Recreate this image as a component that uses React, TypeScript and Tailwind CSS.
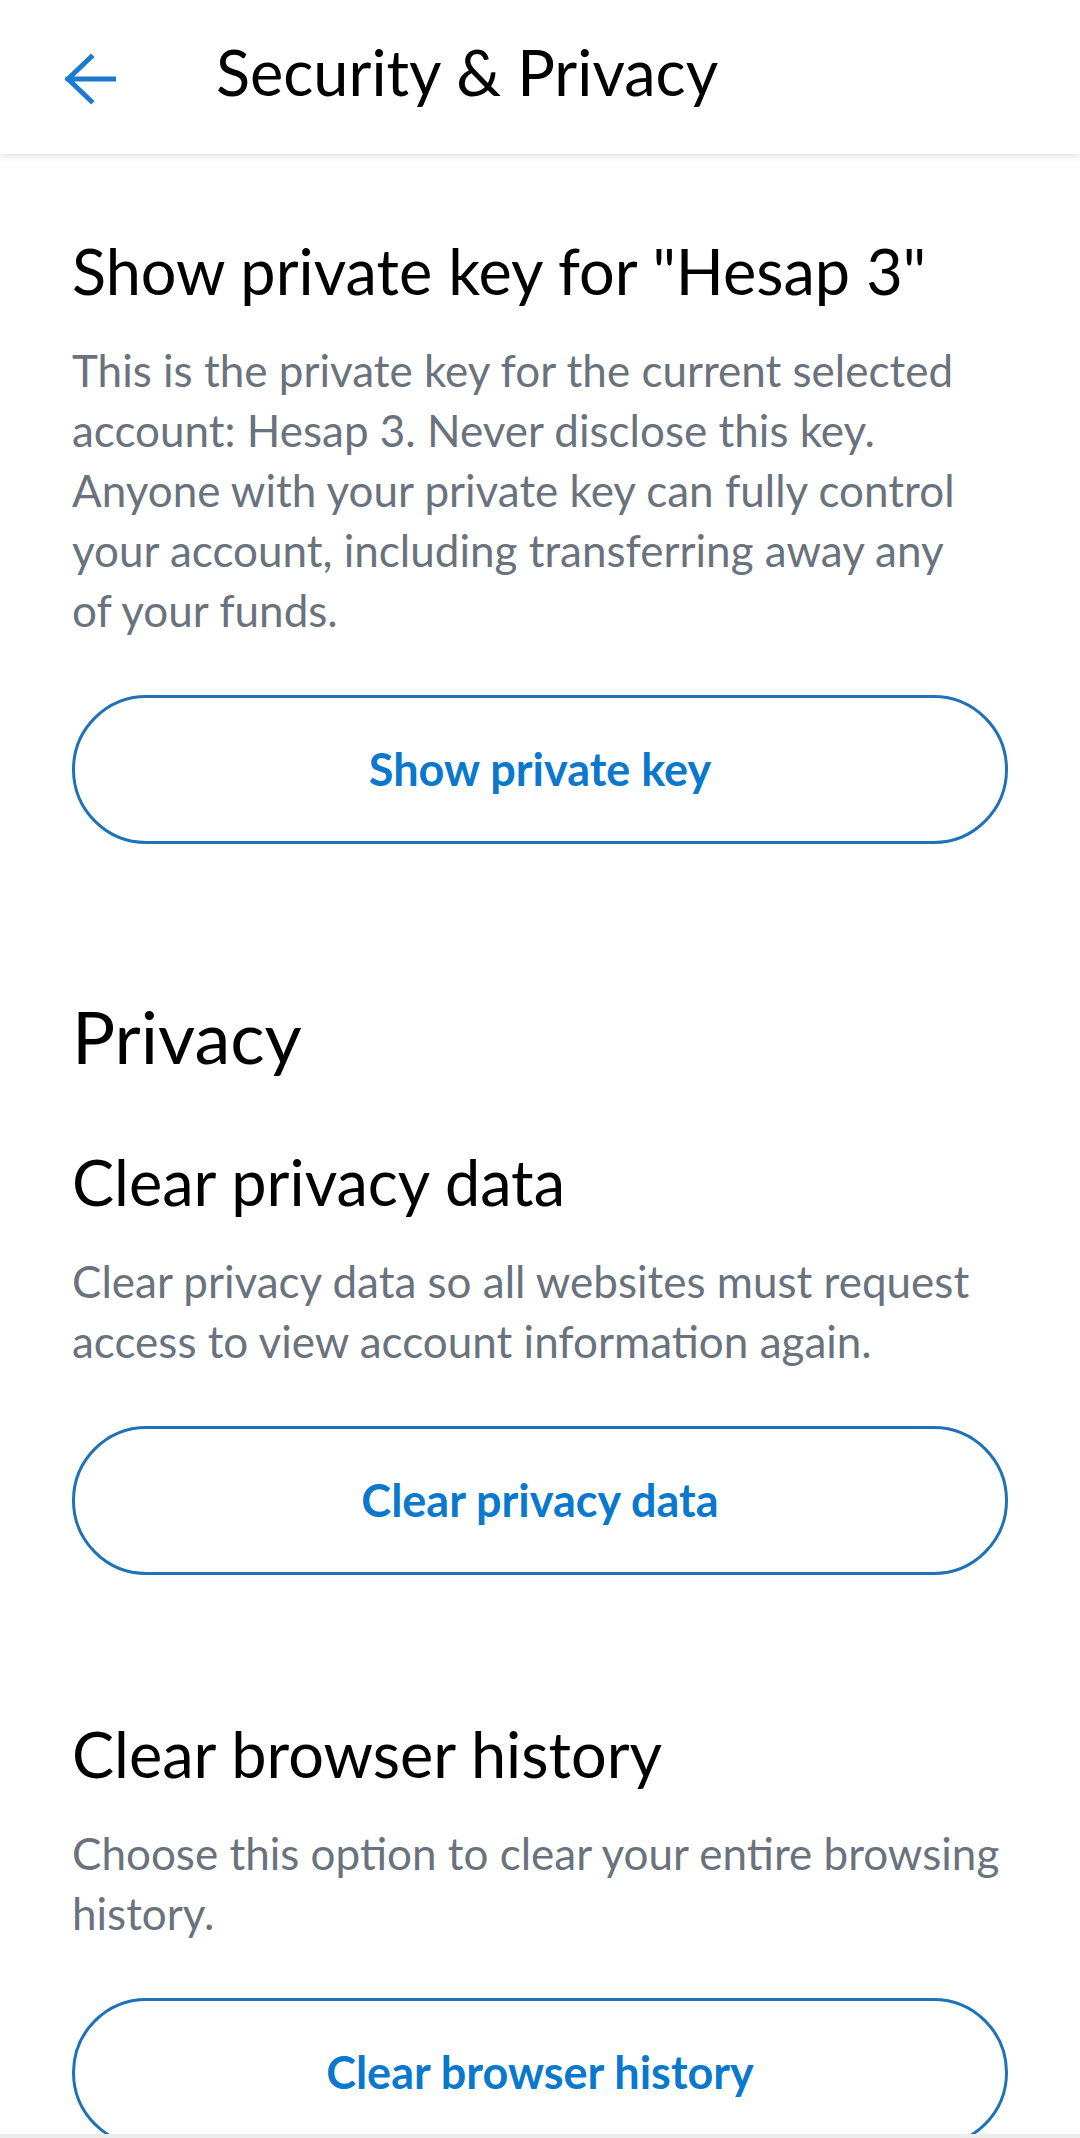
import { ReactNode } from "react";

const font = { fontFamily: "Lato, 'Noto Sans', sans-serif" };

function BackArrow() {
	return (
		<svg width="52" height="52" viewBox="0 0 52 52" fill="none">
			<path
				d="M27 4 L4 26 L27 48 M4 26 H50"
				stroke="#1a7bd0"
				strokeWidth="5"
				strokeLinecap="square"
			/>
		</svg>
	);
}

function OutlineButton({ children }: { children: ReactNode }) {
	return (
		<button className="w-full h-[149px] shrink-0 rounded-full border-[3px] border-[#2072b6] bg-white text-[#0a78cc] text-[45px] font-bold">
			{children}
		</button>
	);
}

function Setting({
	title,
	text,
	action,
}: {
	title: string;
	text: ReactNode;
	action: string;
}) {
	return (
		<div className="flex flex-col">
			<h3 className="text-[63px] leading-[76px] text-black">{title}</h3>
			<p className="mt-[31px] text-[44px] leading-[60px] text-[#6a737d]">{text}</p>
			<div className="mt-[55px]">
				<OutlineButton>{action}</OutlineButton>
			</div>
		</div>
	);
}

export default function App() {
	return (
		<div className="w-[1080px] h-[2138px] bg-white overflow-hidden flex flex-col relative" style={font}>
			<header className="h-[154px] shrink-0 flex items-center bg-white shadow-[0_3px_6px_rgba(0,0,0,0.1)] z-10">
				<div className="pl-[64px] pt-[4px]">
					<BackArrow />
				</div>
				<h1 className="ml-[100px] mb-[10px] text-[63px] leading-[76px] text-black">Security &amp; Privacy</h1>
			</header>

			<main className="flex-1 px-[72px] pt-[79px] flex flex-col">
				<Setting
					title={'Show private key for "Hesap 3"'}
					text={
						<>
							This is the private key for the current selected account: Hesap 3. Never disclose this key.
							Anyone with your private key can fully control your account, including transferring away any
							<br />
							of your funds.
						</>
					}
					action="Show private key"
				/>

				<h2 className="mt-[150px] text-[72px] leading-[84px] text-black">Privacy</h2>

				<div className="mt-[66px]">
					<Setting
						title="Clear privacy data"
						text="Clear privacy data so all websites must request access to view account information again."
						action="Clear privacy data"
					/>
				</div>

				<div className="mt-[141px]">
					<Setting
						title="Clear browser history"
						text="Choose this option to clear your entire browsing history."
						action="Clear browser history"
					/>
				</div>
			</main>

			<div className="absolute bottom-0 left-0 right-0 h-[4px] bg-[#ececec]" />
		</div>
	);
}
